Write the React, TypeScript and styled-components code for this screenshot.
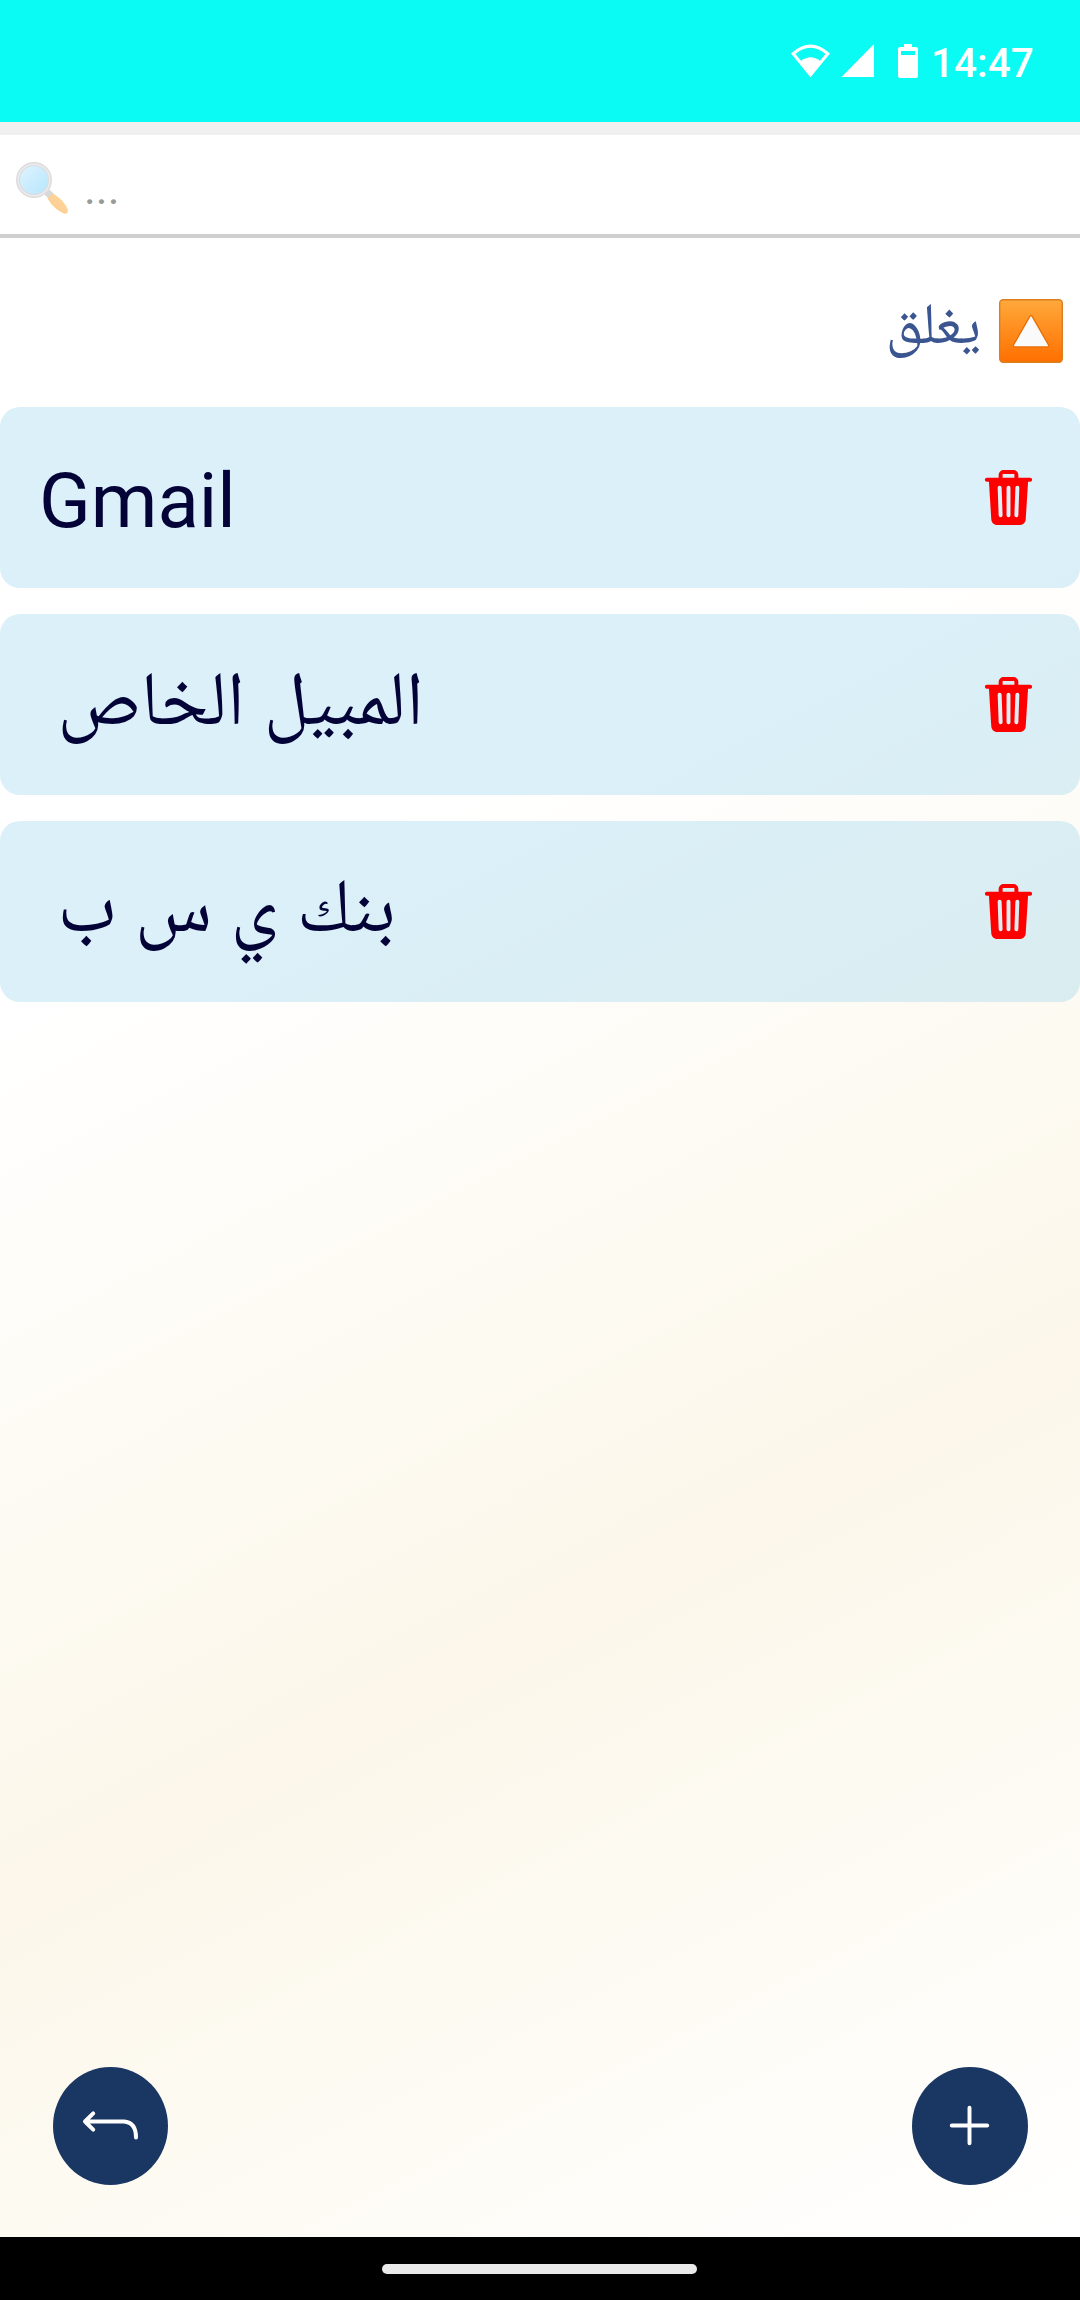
import React from 'react';
import styled, { createGlobalStyle } from 'styled-components';
import { IoTrash, IoAdd } from 'react-icons/io5';

const Global = createGlobalStyle`
  * { box-sizing: border-box; }
  body { margin: 0; background: #fff; font-family: Roboto, "Noto Naskh Arabic", "Noto Sans Arabic", "DejaVu Sans", sans-serif; }
`;
const Screen = styled.div`
  width: 1080px; height: 2300px; display: flex; flex-direction: column; overflow: hidden;
`;
const StatusBar = styled.header`
  height: 122px; flex: none; background: #09fbf3; display: flex; justify-content: flex-end;
  padding: 42px 47px 0 0;
`;
const Clock = styled.time`
  width: 102px; font-size: 40.5px; line-height: 42px; font-weight: 500; color: #fff; margin-left: 11px; white-space: nowrap;
`;
const Divider = styled.div`height: 13px; flex: none; background: #f0f0f0;`;
const Page = styled.main`
  flex: 1; display: flex; flex-direction: column;
  background: linear-gradient(152.8deg, #fff 0%, #fff 33.3%, #fcf7ea 66.6%, #fff 100%);
`;
const Search = styled.div`
  height: 103px; flex: none; display: flex; padding: 25px 0 0 14px; gap: 14px;
  background: #fff; border-bottom: 4px solid #cfcfcf;
`;
const Placeholder = styled.span`font-size: 45px; line-height: 57px; color: #999;`;
const Toggle = styled.button`
  all: unset; box-sizing: border-box; height: 169px; flex: none; display: flex; justify-content: flex-end;
  padding: 61px 17px 0 0; gap: 18px;
`;
const ToggleLabel = styled.span`
  font-size: 58px; line-height: 64px; height: 64px; color: #3b5590; margin-top: -8px;
`;
const List = styled.ul`
  list-style: none; margin: 0; padding: 0; display: flex; flex-direction: column; gap: 26px;
`;
const Row = styled.li`
  height: 181px; border-radius: 20px; background: rgba(135, 206, 235, 0.3);
  display: flex; align-items: center; justify-content: space-between; padding: 0 40px 0 39px;
`;
const Label = styled.span<{ $arabic: boolean }>`
  font-size: 76px; line-height: 100px; color: #030338; white-space: nowrap;
  padding-left: ${p => (p.$arabic ? 18.5 : 0)}px;
  margin-top: ${p => (p.$arabic ? -14 : 6)}px;
`;
const Actions = styled.footer`
  margin-top: auto; display: flex; justify-content: space-between; padding: 0 52px 52px 53px;
`;
const Round = styled.button<{ $width: number }>`
  border: 0; padding: 0; width: ${p => p.$width}px; height: 118px; border-radius: 50%; background: #193762; color: #fff;
  display: flex; align-items: center; justify-content: center;
  svg { margin-top: -1px; }
`;
const AddIcon = styled(IoAdd)`margin-right: 1px;`;
const NavBar = styled.div`
  height: 63px; flex: none; background: #000; display: flex; justify-content: center; padding: 27px 1px 0 0;
`;
const Pill = styled.div`width: 315px; height: 10px; border-radius: 5px; background: #eaeaea;`;

const StatusIcons = () => (
  <svg width="130" height="38" viewBox="790 42 130 38" fill="#fff">
    <path d="M793.2 53.8Q810.5 38.5 827.8 53.8L810.5 74.8Z" fill="none" stroke="#fff" strokeWidth="3.2" />
    <path d="M801 61Q810.5 53.5 820 61L821 63.5L810.5 77L800 63.5Z" />
    <path d="M874 44V77H841.5Z" />
    <path fillRule="evenodd" d="M904 44h8v3h4q2 0 2 2v27q0 2-2 2h-16q-2 0-2-2v-27q0-2 2-2h4zM901 51v4h14v-4z" />
  </svg>
);

const Magnifier = () => (
  <svg width="56" height="56" viewBox="14 160 56 56">
    <defs>
      <linearGradient id="lens" x1="0" y1="0" x2="1" y2="1">
        <stop offset="0" stopColor="#e1f4ff" /><stop offset="1" stopColor="#b3e5fc" />
      </linearGradient>
      <linearGradient id="grip" x1="1" y1="0" x2="0" y2="1">
        <stop offset="0" stopColor="#ffd9a0" /><stop offset="1" stopColor="#fcc98c" />
      </linearGradient>
    </defs>
    <path d="M47 192L52 197" stroke="#d6d8da" strokeWidth="7" />
    <path d="M52.5 193.5Q62 198 67.5 208.5Q69 214 64.5 213.8Q54 209.5 47.5 198.5Z" fill="url(#grip)" />
    <circle cx="34" cy="180" r="16" fill="url(#lens)" stroke="#dcdcde" strokeWidth="4" />
    <circle cx="34" cy="180" r="15.8" fill="none" stroke="#ececee" strokeWidth="1.4" />
  </svg>
);

const UpButton = () => (
  <svg width="64" height="64" viewBox="0 0 64 64">
    <defs>
      <linearGradient id="up" x1="0" y1="0" x2="0" y2="1">
        <stop offset="0" stopColor="#ffa93b" /><stop offset="1" stopColor="#ff6f00" />
      </linearGradient>
    </defs>
    <rect x=".7" y=".7" width="62.6" height="62.6" rx="3.5" fill="url(#up)" stroke="#dc7d20" strokeWidth="1.4" />
    <path d="M32 18L48.3 46.6H15.7Z" fill="#fafafa" stroke="#e76f08" strokeWidth="4" strokeLinejoin="round" />
    <path d="M32 18L48.3 46.6H15.7Z" fill="#fafafa" stroke="#fafafa" strokeWidth="1.4" strokeLinejoin="round" />
  </svg>
);

const BackArrow = () => (
  <svg width="58" height="32" viewBox="82 2110 58 32" fill="none" stroke="#fff" strokeWidth="4" strokeLinecap="round" strokeLinejoin="round">
    <path d="M93.2 2113.3L85 2121.5L93.2 2129.7M86 2121.5H124Q136 2122.5 136 2137.5" />
  </svg>
);

const items = [
  { text: 'Gmail', arabic: false },
  { text: 'المبيل الخاص', arabic: true },
  { text: 'بنك ي س ب', arabic: true },
];

export default function App() {
  return (
    <Screen>
      <Global />
      <StatusBar>
        <StatusIcons />
        <Clock>14:47</Clock>
      </StatusBar>
      <Divider />
      <Page>
        <Search>
          <Magnifier />
          <Placeholder>...</Placeholder>
        </Search>
        <Toggle>
          <ToggleLabel dir="rtl">يغلق</ToggleLabel>
          <UpButton />
        </Toggle>
        <List>
          {items.map(i => (
            <Row key={i.text}>
              <Label $arabic={i.arabic} dir="auto">{i.text}</Label>
              <IoTrash size={63} color="#ff0000" />
            </Row>
          ))}
        </List>
        <Actions>
          <Round $width={115}><BackArrow /></Round>
          <Round $width={116}><AddIcon size={63} /></Round>
        </Actions>
      </Page>
      <NavBar><Pill /></NavBar>
    </Screen>
  );
}
